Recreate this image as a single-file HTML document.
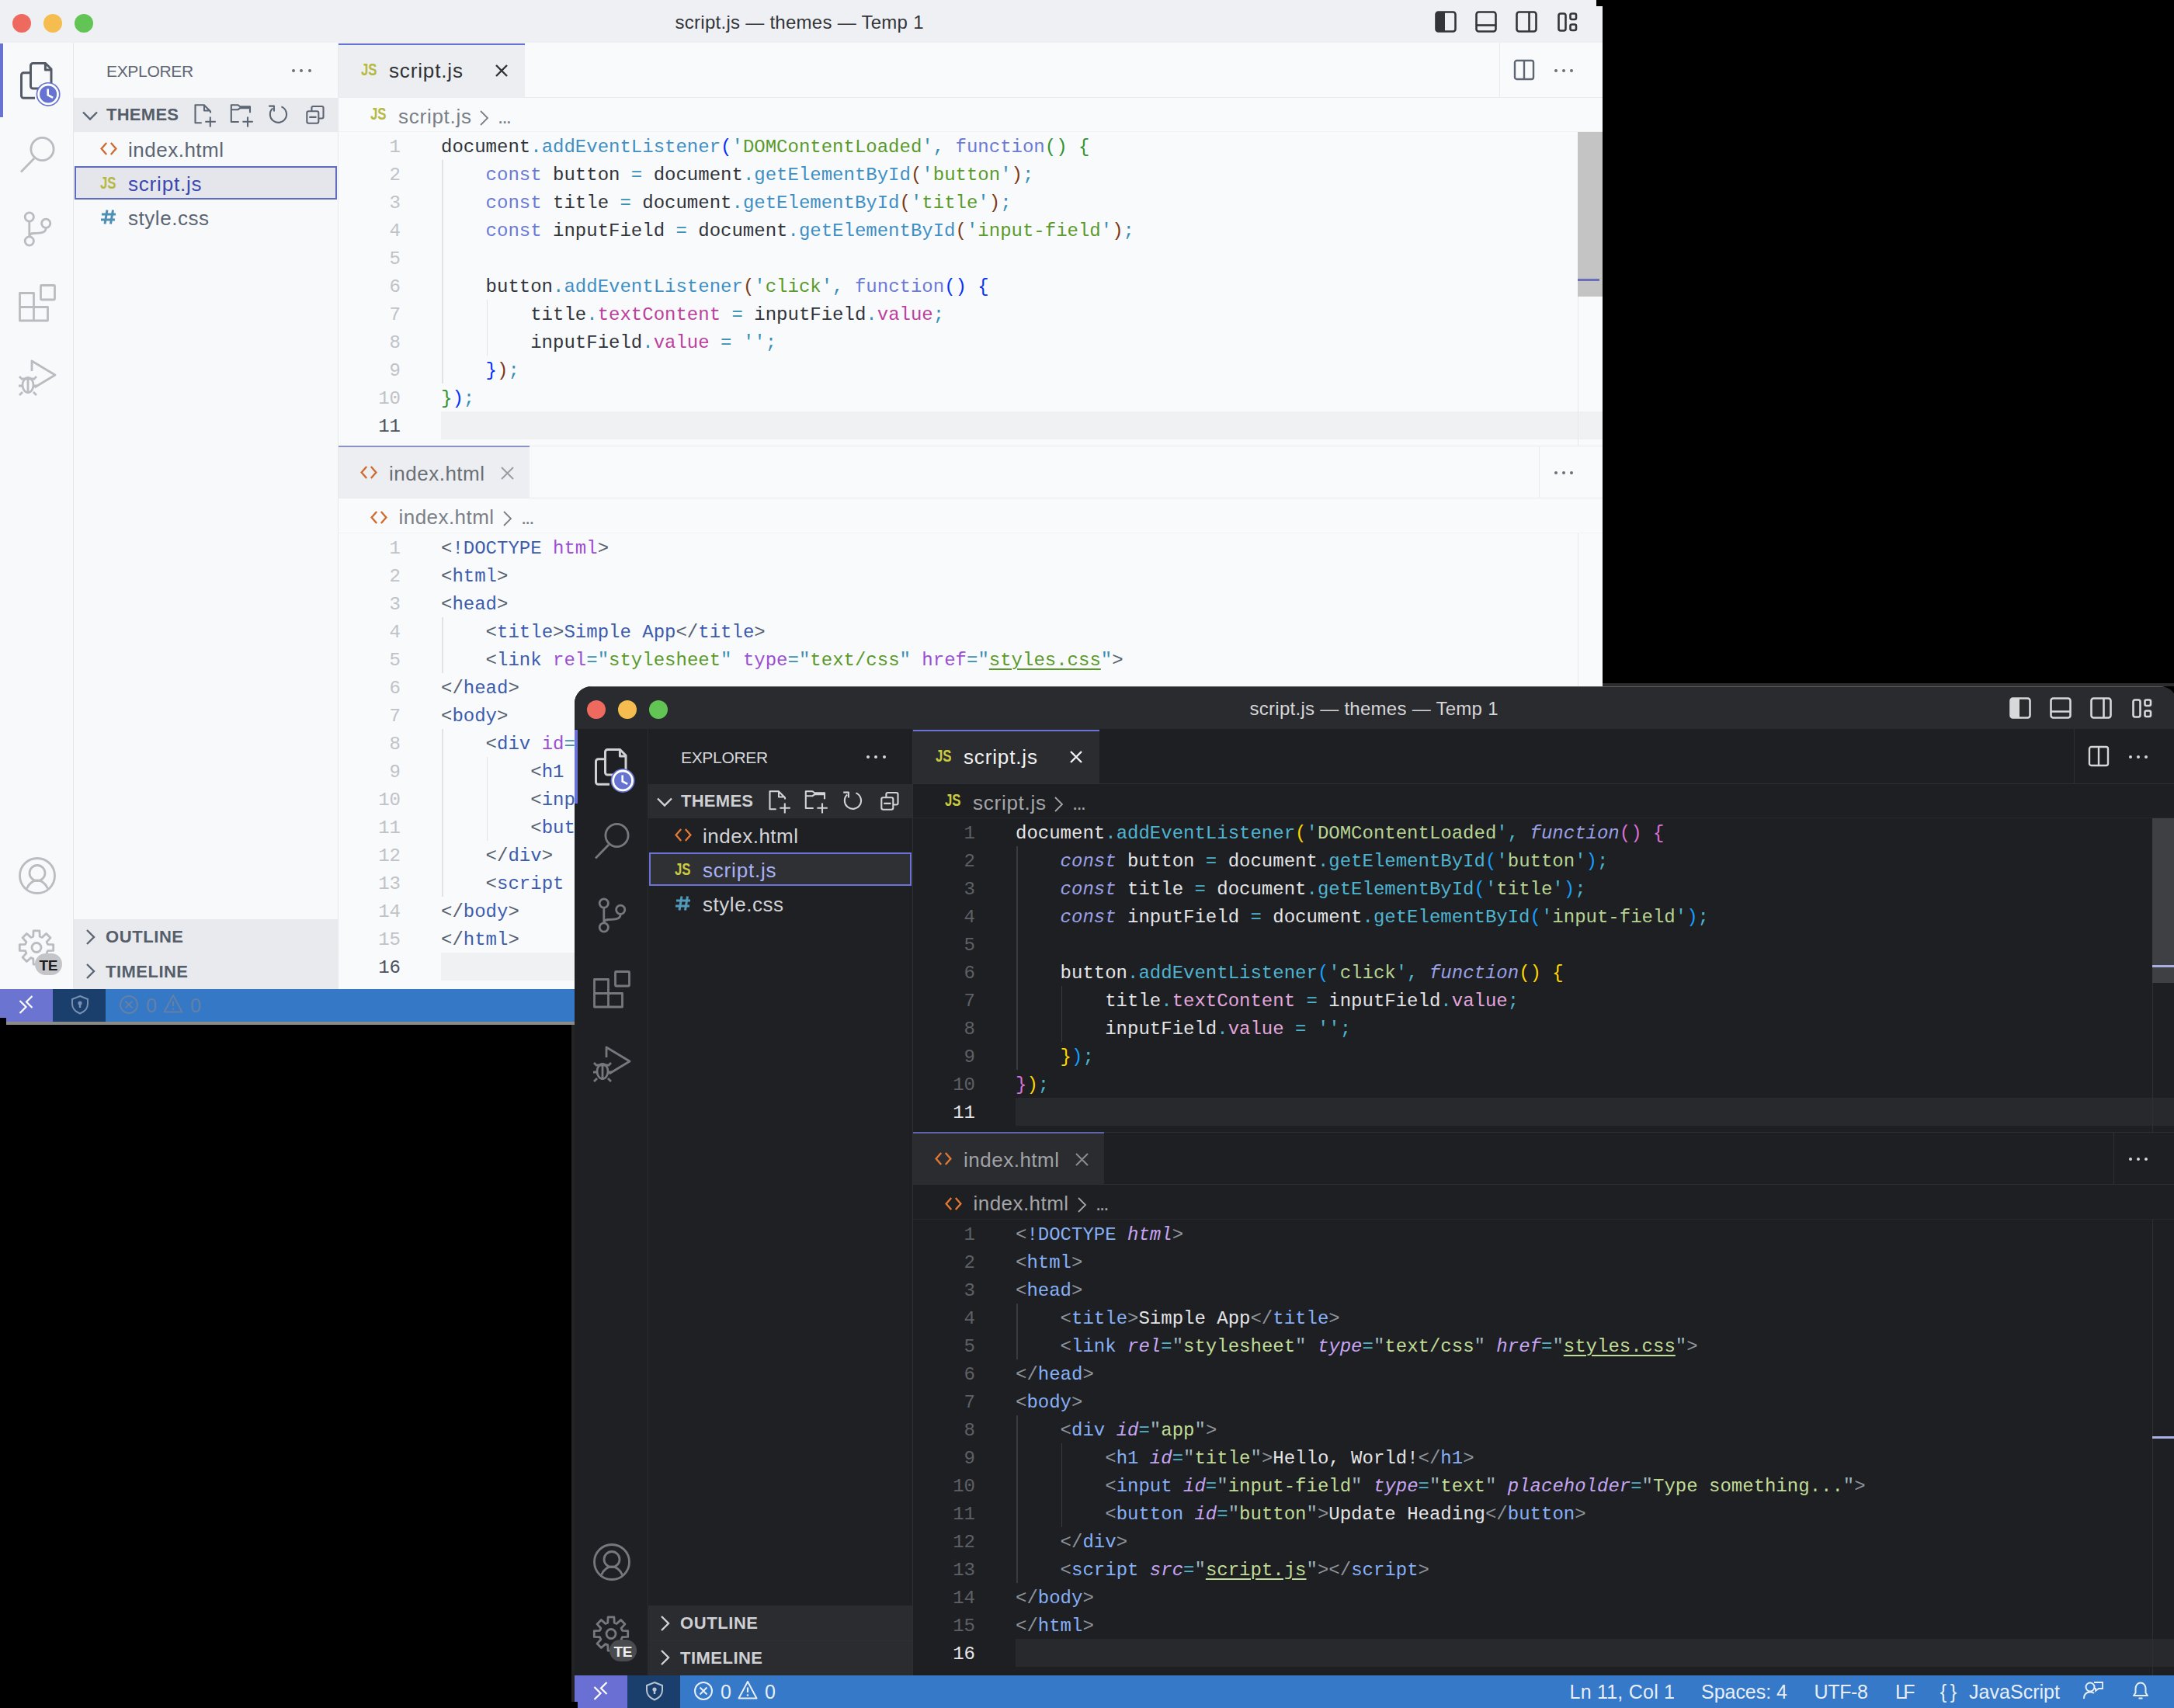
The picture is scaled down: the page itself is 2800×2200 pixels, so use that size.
<!DOCTYPE html><html><head><meta charset="utf-8"><style>
html,body{margin:0;padding:0;background:#000;}
body{width:2800px;height:2200px;position:relative;overflow:hidden;font-family:"Liberation Sans",sans-serif;}
.win{position:absolute;overflow:hidden;}
.r,.t,.s,.m{position:absolute;}
.t{white-space:pre;}
.m{white-space:pre;font-family:"Liberation Mono",monospace;font-size:24px;line-height:24px;}
</style></head><body><div class="win" style="left:0px;top:0px;width:2064px;height:1320px;"><div class="r" style="left:0px;top:0px;width:2064px;height:1320px;background:#f9fafb;"></div><div class="r" style="left:0px;top:0px;width:2064px;height:55px;background:#eff0f3;"></div><div class="r" style="left:16px;top:18px;width:24px;height:24px;border-radius:50%;background:#ee6a5f"></div><div class="r" style="left:56px;top:18px;width:24px;height:24px;border-radius:50%;background:#f5bd4f"></div><div class="r" style="left:96px;top:18px;width:24px;height:24px;border-radius:50%;background:#61c454"></div><div class="t" style="left:869.5px;top:16.9px;font-size:24px;line-height:24px;color:#333539;letter-spacing:0.27px;">script.js — themes — Temp 1</div><svg class="s" style="left:0px;top:0px;" width="2064" height="55" viewBox="0 0 2064 55"><rect x="1849.5" y="15.5" width="25" height="25" rx="3" stroke="#333539" stroke-width="2.6" fill="none"/><path d="M1849.5 18.5 a3 3 0 0 1 3-3 h8.5 v25 h-8.5 a3 3 0 0 1-3-3z" fill="#333539"/><rect x="1901.5" y="15.5" width="25" height="25" rx="3" stroke="#333539" stroke-width="2.6" fill="none"/><path d="M1901.5 32.5 h25" stroke="#333539" stroke-width="2.6" fill="none"/><rect x="1953.5" y="15.5" width="25" height="25" rx="3" stroke="#333539" stroke-width="2.6" fill="none"/><path d="M1969.5 15.5 v25" stroke="#333539" stroke-width="2.6" fill="none"/><rect x="2007.5" y="17.5" width="9" height="22" rx="2.5" stroke="#333539" stroke-width="2.6" fill="none"/><rect x="2022.5" y="17.5" width="7.5" height="7.5" rx="2" stroke="#333539" stroke-width="2.6" fill="none"/><rect x="2022.5" y="31.5" width="7.5" height="7.5" rx="2" stroke="#333539" stroke-width="2.6" fill="none"/></svg><div class="r" style="left:0px;top:55px;width:95px;height:1219px;background:#f8f9fa;"></div><div class="r" style="left:94px;top:55px;width:1px;height:1219px;background:#e6e7ea;"></div><div class="r" style="left:0px;top:56px;width:4px;height:95px;background:#6673d1;"></div><svg class="s" style="left:0px;top:0px;" width="95" height="1274" viewBox="0 0 95 1274"><path d="M45 126.3 H30.5 a3 3 0 0 1-3-3 V96.7 a3 3 0 0 1 3-3 H39.5" stroke="#545b66" stroke-width="3" fill="none" stroke-linejoin="round"/><path d="M50 114 H42.5 a3 3 0 0 1-3-3 V84.5 a3 3 0 0 1 3-3 H58.6 L66 89 V108" stroke="#545b66" stroke-width="3" fill="none" stroke-linejoin="round"/><path d="M58.4 81.5 V90 H66" stroke="#545b66" stroke-width="3" fill="none" stroke-linejoin="round"/><circle cx="62.1" cy="121.4" r="15.5" fill="#6673d1"/><circle cx="62.1" cy="121.4" r="12.4" fill="none" stroke="#fff" stroke-width="2.8"/><path d="M61.7 114.5 V122.5 L68.2 125.8" stroke="#fff" stroke-width="2.6" fill="none"/><circle cx="54.5" cy="192" r="14.6" stroke="#b9bcc1" stroke-width="2.8" fill="none" stroke-linejoin="round"/><path d="M27 221.5 L44 204" stroke="#b9bcc1" stroke-width="2.8" fill="none" stroke-linejoin="round"/><circle cx="37.8" cy="279.5" r="5.6" stroke="#b9bcc1" stroke-width="2.8" fill="none" stroke-linejoin="round"/><circle cx="59.2" cy="287.8" r="5.6" stroke="#b9bcc1" stroke-width="2.8" fill="none" stroke-linejoin="round"/><circle cx="37.8" cy="310.5" r="5.6" stroke="#b9bcc1" stroke-width="2.8" fill="none" stroke-linejoin="round"/><path d="M37.8 285 V305 M59.2 293.4 C59.2 300 52 300.5 44 300.5 C40 300.5 37.8 302 37.8 305" stroke="#b9bcc1" stroke-width="2.8" fill="none" stroke-linejoin="round"/><path d="M25.5 377.5 H43.5 V413 H25.5 Z M25.5 395.5 H61.5 V413 H43.5" stroke="#b9bcc1" stroke-width="2.8" fill="none" stroke-linejoin="round"/><rect x="52.5" y="367.5" width="18" height="18.5" rx="1" stroke="#b9bcc1" stroke-width="2.8" fill="none" stroke-linejoin="round"/><path d="M41 478 V465 L71 483 L44.5 499" stroke="#b9bcc1" stroke-width="2.8" fill="none" stroke-linejoin="round"/><ellipse cx="36" cy="496" rx="7" ry="9.5" stroke="#b9bcc1" stroke-width="2.8" fill="none" stroke-linejoin="round"/><path d="M29 488 h14 M25 485 l4 4 M47 485 l-4 4 M24 497 h5 M43 497 h5 M25 509 l4 -4 M47 509 l-4 -4 M36 486.5 v20" stroke="#b9bcc1" stroke-width="2.8" fill="none" stroke-linejoin="round"/><circle cx="48" cy="1128" r="22.5" stroke="#b9bcc1" stroke-width="2.8" fill="none" stroke-linejoin="round"/><circle cx="48" cy="1124.5" r="10" stroke="#b9bcc1" stroke-width="2.8" fill="none" stroke-linejoin="round"/><path d="M34.5 1144.5 C38 1137 43 1134 48 1134 C53 1134 58 1137 61.5 1144.5" stroke="#b9bcc1" stroke-width="2.8" fill="none" stroke-linejoin="round"/><path d="M42.8 1206.1 L43.1 1198.8 L50.9 1198.8 L51.2 1206.1 L54.2 1207.4 L59.6 1202.5 L65.0 1207.9 L60.1 1213.3 L61.4 1216.3 L68.7 1216.6 L68.7 1224.4 L61.4 1224.7 L60.1 1227.7 L65.0 1233.1 L59.6 1238.5 L54.2 1233.6 L51.2 1234.9 L50.9 1242.2 L43.1 1242.2 L42.8 1234.9 L39.8 1233.6 L34.4 1238.5 L29.0 1233.1 L33.9 1227.7 L32.6 1224.7 L25.3 1224.4 L25.3 1216.6 L32.6 1216.3 L33.9 1213.3 L29.0 1207.9 L34.4 1202.5 L39.8 1207.4Z" stroke="#b9bcc1" stroke-width="2.8" fill="none" stroke-linejoin="round"/><circle cx="47" cy="1220.5" r="6" stroke="#b9bcc1" stroke-width="2.8" fill="none" stroke-linejoin="round"/></svg><div class="r" style="left:45px;top:1228px;width:35px;height:28px;border-radius:14px;background:#c4c5c8"></div><div class="t" style="left:50.5px;top:1233.9px;font-size:19px;line-height:19px;color:#1e1e1e;font-weight:700;letter-spacing:-0.28px;">TE</div><div class="r" style="left:95px;top:55px;width:340px;height:1219px;background:#f8f9fa;"></div><div class="t" style="left:137.0px;top:81.2px;font-size:21px;line-height:21px;color:#5f6672;letter-spacing:-0.33px;">EXPLORER</div><div class="r" style="left:375.5px;top:89.0px;width:4px;height:4px;border-radius:50%;background:#6b6f76"></div><div class="r" style="left:386.0px;top:89.0px;width:4px;height:4px;border-radius:50%;background:#6b6f76"></div><div class="r" style="left:396.5px;top:89.0px;width:4px;height:4px;border-radius:50%;background:#6b6f76"></div><div class="r" style="left:95px;top:126px;width:340px;height:44px;background:#e8eaed;"></div><svg class="s" style="left:105px;top:142px;" width="22" height="14" viewBox="0 0 22 14"><path d="M2 2.5 L11 11.5 L20 2.5" stroke="#5b6573" stroke-width="2.4" fill="none"/></svg><div class="t" style="left:137.0px;top:137.4px;font-size:22px;line-height:22px;color:#555d6a;font-weight:700;letter-spacing:0.27px;">THEMES</div><svg class="s" style="left:0px;top:0px;" width="435" height="170" viewBox="0 0 435 170"><path d="M259.7 158.2 H251.5 V135.3 H262.8 L271 143.5 V145.5 M263 135.3 V142.5 H271" stroke="#5b6573" stroke-width="2.1" fill="none" stroke-linejoin="round"/><path d="M270.8 150.5 V163.6 M264.3 156.8 H277.8" stroke="#5b6573" stroke-width="2.1" fill="none" stroke-linejoin="round"/><path d="M307.7 157 H297.8 V135.3 H306.5 L309 137.3 H322 V145.2 M297.8 141.2 H306.5 L309 139.3 H322" stroke="#5b6573" stroke-width="2.1" fill="none" stroke-linejoin="round"/><path d="M319 150.5 V163.6 M312.4 156.8 H325.8" stroke="#5b6573" stroke-width="2.1" fill="none" stroke-linejoin="round"/><path d="M362.4 137.4 A10.6 10.6 0 1 1 351.2 139.5" stroke="#5b6573" stroke-width="2.1" fill="none" stroke-linejoin="round"/><path d="M346.2 136.6 H352.9 V143.5" stroke="#5b6573" stroke-width="2.1" fill="none" stroke-linejoin="round"/><rect x="395.3" y="143.2" width="15" height="15.5" rx="2.2" stroke="#5b6573" stroke-width="2.1" fill="none" stroke-linejoin="round"/><path d="M401.4 143.2 V139 a2 2 0 0 1 2-2 H414.5 a2 2 0 0 1 2 2 V150.5 a2 2 0 0 1-2 2 H410.3 M398.3 150.9 H407.5" stroke="#5b6573" stroke-width="2.1" fill="none" stroke-linejoin="round"/></svg><svg class="s" style="left:128.5px;top:183px;" width="22" height="17" viewBox="0 0 22 17"><path d="M8.2 1 L1.6 8.5 L8.2 16 M13.8 1 L20.4 8.5 L13.8 16" stroke="#d0692c" stroke-width="2.3" fill="none"/></svg><div class="t" style="left:165.0px;top:180.0px;font-size:26px;line-height:26px;color:#5b6573;letter-spacing:0.50px;">index.html</div><div class="r" style="left:96px;top:214px;width:338px;height:43px;background:#e4e6eb;border:2px solid #5f6bbf;box-sizing:border-box"></div><div class="t" style="left:129.4px;top:224.9px;font-size:22.5px;line-height:22.5px;color:#b5b942;font-weight:700;transform:scaleX(0.747);transform-origin:left">JS</div><div class="t" style="left:165.0px;top:224.0px;font-size:26px;line-height:26px;color:#3a47b0;letter-spacing:0.80px;">script.js</div><svg class="s" style="left:130px;top:270px;" width="20" height="19" viewBox="0 0 20 19"><path d="M8 0.5 L5 18.5 M15.5 0.5 L12.5 18.5 M1 6 H19 M0 13 H18" stroke="#4f8fb5" stroke-width="3" fill="none"/></svg><div class="t" style="left:165.0px;top:268.0px;font-size:26px;line-height:26px;color:#5b6573;letter-spacing:0.54px;">style.css</div><div class="r" style="left:95px;top:1184px;width:340px;height:90px;background:#e8eaed;"></div><div class="r" style="left:95px;top:1229px;width:340px;height:1px;background:#e9eaec;"></div><svg class="s" style="left:109px;top:1196px;" width="14" height="22" viewBox="0 0 14 22"><path d="M3 2 L12 11 L3 20" stroke="#5b6573" stroke-width="2.4" fill="none"/></svg><div class="t" style="left:136.0px;top:1196.4px;font-size:22px;line-height:22px;color:#555d6a;font-weight:700;letter-spacing:0.58px;">OUTLINE</div><svg class="s" style="left:109px;top:1240px;" width="14" height="22" viewBox="0 0 14 22"><path d="M3 2 L12 11 L3 20" stroke="#5b6573" stroke-width="2.4" fill="none"/></svg><div class="t" style="left:136.0px;top:1240.9px;font-size:22px;line-height:22px;color:#555d6a;font-weight:700;letter-spacing:0.48px;">TIMELINE</div><div class="r" style="left:435px;top:55px;width:1px;height:1219px;background:#e9eaec;"></div><div class="r" style="left:436px;top:55px;width:1628px;height:70px;background:#f9fafb;"></div><div class="r" style="left:436px;top:125px;width:1628px;height:1px;background:#e9eaec;"></div><div class="r" style="left:436px;top:55px;width:240px;height:70px;background:#eceef1;"></div><div class="r" style="left:436px;top:56px;width:240px;height:2px;background:#6673d1;"></div><div class="t" style="left:465px;top:79.4px;font-size:22.5px;line-height:22.5px;color:#b5b942;font-weight:700;transform:scaleX(0.747);transform-origin:left">JS</div><div class="t" style="left:501.0px;top:78.0px;font-size:26px;line-height:26px;color:#303236;letter-spacing:0.86px;">script.js</div><svg class="s" style="left:638px;top:83px;" width="16" height="16" viewBox="0 0 16 16"><path d="M1 1 L15 15 M15 1 L1 15" stroke="#303236" stroke-width="2.4"/></svg><div class="r" style="left:1931px;top:55px;width:1px;height:70px;background:#e9eaec;"></div><svg class="s" style="left:1949px;top:76px;" width="28" height="28" viewBox="0 0 28 28"><rect x="2" y="2" width="24" height="24" rx="2.5" stroke="#5e6673" stroke-width="2.4" fill="none"/><path d="M14 2 V26" stroke="#5e6673" stroke-width="2.4"/></svg><div class="r" style="left:2001.8px;top:88.8px;width:4.4px;height:4.4px;border-radius:50%;background:#6b6f76"></div><div class="r" style="left:2011.8px;top:88.8px;width:4.4px;height:4.4px;border-radius:50%;background:#6b6f76"></div><div class="r" style="left:2021.8px;top:88.8px;width:4.4px;height:4.4px;border-radius:50%;background:#6b6f76"></div><div class="t" style="left:477px;top:136.4px;font-size:22.5px;line-height:22.5px;color:#b5b942;font-weight:700;transform:scaleX(0.747);transform-origin:left">JS</div><div class="t" style="left:513.0px;top:137.0px;font-size:26px;line-height:26px;color:#7b8088;letter-spacing:0.74px;">script.js</div><svg class="s" style="left:616px;top:141px;" width="14" height="22" viewBox="0 0 14 22"><path d="M3 2 L12 11 L3 20" stroke="#7b8088" stroke-width="1.8" fill="none"/></svg><div class="t" style="left:641.0px;top:137.0px;font-size:26px;line-height:26px;color:#7b8088;letter-spacing:-1.83px;">...</div><div class="r" style="left:436px;top:169px;width:1628px;height:1px;background:#f1f2f4;"></div><div class="r" style="left:568px;top:530px;width:1496px;height:36px;background:#eff1f3;"></div><div class="r" style="left:569.0px;top:206px;width:1.6px;height:288px;background:#e1e3e6;"></div><div class="r" style="left:626.6px;top:386px;width:1.6px;height:72px;background:#e1e3e6;"></div><div class="m" style="left:501.6px;top:177.6px;color:#bfc3c8">1</div><div class="m" style="left:568px;top:177.6px"><span style="color:#30343a;">document</span><span style="color:#3a8fb5;">.</span><span style="color:#3e8fc4;">addEventListener</span><span style="color:#0431fa;">(</span><span style="color:#3a8fb5;">&#x27;</span><span style="color:#5a9a2b;">DOMContentLoaded</span><span style="color:#3a8fb5;">&#x27;</span><span style="color:#3a8fb5;">,</span><span style="color:#30343a;"> </span><span style="color:#6b79d6;">function</span><span style="color:#319331;">()</span><span style="color:#30343a;"> </span><span style="color:#319331;">{</span></div><div class="m" style="left:501.6px;top:213.6px;color:#bfc3c8">2</div><div class="m" style="left:568px;top:213.6px"><span style="color:#30343a;">    </span><span style="color:#6b79d6;">const</span><span style="color:#30343a;"> button </span><span style="color:#3a8fb5;">=</span><span style="color:#30343a;"> document</span><span style="color:#3a8fb5;">.</span><span style="color:#3e8fc4;">getElementById</span><span style="color:#7b3814;">(</span><span style="color:#3a8fb5;">&#x27;</span><span style="color:#5a9a2b;">button</span><span style="color:#3a8fb5;">&#x27;</span><span style="color:#7b3814;">)</span><span style="color:#3a8fb5;">;</span></div><div class="m" style="left:501.6px;top:249.6px;color:#bfc3c8">3</div><div class="m" style="left:568px;top:249.6px"><span style="color:#30343a;">    </span><span style="color:#6b79d6;">const</span><span style="color:#30343a;"> title </span><span style="color:#3a8fb5;">=</span><span style="color:#30343a;"> document</span><span style="color:#3a8fb5;">.</span><span style="color:#3e8fc4;">getElementById</span><span style="color:#7b3814;">(</span><span style="color:#3a8fb5;">&#x27;</span><span style="color:#5a9a2b;">title</span><span style="color:#3a8fb5;">&#x27;</span><span style="color:#7b3814;">)</span><span style="color:#3a8fb5;">;</span></div><div class="m" style="left:501.6px;top:285.6px;color:#bfc3c8">4</div><div class="m" style="left:568px;top:285.6px"><span style="color:#30343a;">    </span><span style="color:#6b79d6;">const</span><span style="color:#30343a;"> inputField </span><span style="color:#3a8fb5;">=</span><span style="color:#30343a;"> document</span><span style="color:#3a8fb5;">.</span><span style="color:#3e8fc4;">getElementById</span><span style="color:#7b3814;">(</span><span style="color:#3a8fb5;">&#x27;</span><span style="color:#5a9a2b;">input-field</span><span style="color:#3a8fb5;">&#x27;</span><span style="color:#7b3814;">)</span><span style="color:#3a8fb5;">;</span></div><div class="m" style="left:501.6px;top:321.6px;color:#bfc3c8">5</div><div class="m" style="left:501.6px;top:357.6px;color:#bfc3c8">6</div><div class="m" style="left:568px;top:357.6px"><span style="color:#30343a;">    button</span><span style="color:#3a8fb5;">.</span><span style="color:#3e8fc4;">addEventListener</span><span style="color:#7b3814;">(</span><span style="color:#3a8fb5;">&#x27;</span><span style="color:#5a9a2b;">click</span><span style="color:#3a8fb5;">&#x27;</span><span style="color:#3a8fb5;">,</span><span style="color:#30343a;"> </span><span style="color:#6b79d6;">function</span><span style="color:#0431fa;">()</span><span style="color:#30343a;"> </span><span style="color:#0431fa;">{</span></div><div class="m" style="left:501.6px;top:393.6px;color:#bfc3c8">7</div><div class="m" style="left:568px;top:393.6px"><span style="color:#30343a;">        title</span><span style="color:#3a8fb5;">.</span><span style="color:#bd3f9d;">textContent</span><span style="color:#30343a;"> </span><span style="color:#3a8fb5;">=</span><span style="color:#30343a;"> inputField</span><span style="color:#3a8fb5;">.</span><span style="color:#bd3f9d;">value</span><span style="color:#3a8fb5;">;</span></div><div class="m" style="left:501.6px;top:429.6px;color:#bfc3c8">8</div><div class="m" style="left:568px;top:429.6px"><span style="color:#30343a;">        inputField</span><span style="color:#3a8fb5;">.</span><span style="color:#bd3f9d;">value</span><span style="color:#30343a;"> </span><span style="color:#3a8fb5;">=</span><span style="color:#30343a;"> </span><span style="color:#3a8fb5;">&#x27;&#x27;</span><span style="color:#3a8fb5;">;</span></div><div class="m" style="left:501.6px;top:465.6px;color:#bfc3c8">9</div><div class="m" style="left:568px;top:465.6px"><span style="color:#30343a;">    </span><span style="color:#0431fa;">}</span><span style="color:#7b3814;">)</span><span style="color:#3a8fb5;">;</span></div><div class="m" style="left:487.2px;top:501.6px;color:#bfc3c8">10</div><div class="m" style="left:568px;top:501.6px"><span style="color:#319331;">}</span><span style="color:#0431fa;">)</span><span style="color:#3a8fb5;">;</span></div><div class="m" style="left:487.2px;top:537.6px;color:#4b5260">11</div><div class="r" style="left:2032px;top:170px;width:1px;height:404px;background:#e8e8ea;"></div><div class="r" style="left:2032px;top:170px;width:32px;height:212px;background:#c4c4c4;"></div><div class="r" style="left:2032px;top:359px;width:28px;height:3px;background:#6a6fb8;"></div><div class="r" style="left:436px;top:574px;width:1628px;height:1px;background:#e9eaec;"></div><div class="r" style="left:436px;top:575px;width:1628px;height:67px;background:#f9fafb;"></div><div class="r" style="left:436px;top:641px;width:1628px;height:1px;background:#e9eaec;"></div><div class="r" style="left:436px;top:575px;width:246px;height:66px;background:#eceef1;"></div><div class="r" style="left:436px;top:574px;width:246px;height:2px;background:#8a93c4;"></div><svg class="s" style="left:464px;top:600px;" width="22" height="17" viewBox="0 0 22 17"><path d="M8.2 1 L1.6 8.5 L8.2 16 M13.8 1 L20.4 8.5 L13.8 16" stroke="#d0692c" stroke-width="2.3" fill="none"/></svg><div class="t" style="left:501.0px;top:596.7px;font-size:26px;line-height:26px;color:#6a6e75;letter-spacing:0.50px;">index.html</div><svg class="s" style="left:645px;top:601px;" width="17" height="17" viewBox="0 0 17 17"><path d="M1 1 L16 16 M16 1 L1 16" stroke="#9a9ea4" stroke-width="2"/></svg><div class="r" style="left:1982px;top:575px;width:1px;height:66px;background:#e9eaec;"></div><div class="r" style="left:2001.8px;top:606.8px;width:4.4px;height:4.4px;border-radius:50%;background:#6b6f76"></div><div class="r" style="left:2011.8px;top:606.8px;width:4.4px;height:4.4px;border-radius:50%;background:#6b6f76"></div><div class="r" style="left:2021.8px;top:606.8px;width:4.4px;height:4.4px;border-radius:50%;background:#6b6f76"></div><svg class="s" style="left:476.5px;top:657.5px;" width="22" height="17" viewBox="0 0 22 17"><path d="M8.2 1 L1.6 8.5 L8.2 16 M13.8 1 L20.4 8.5 L13.8 16" stroke="#d0692c" stroke-width="2.3" fill="none"/></svg><div class="t" style="left:513.6px;top:653.2px;font-size:26px;line-height:26px;color:#7b8088;letter-spacing:0.44px;">index.html</div><svg class="s" style="left:646px;top:657px;" width="14" height="22" viewBox="0 0 14 22"><path d="M3 2 L12 11 L3 20" stroke="#7b8088" stroke-width="1.8" fill="none"/></svg><div class="t" style="left:671.0px;top:653.2px;font-size:26px;line-height:26px;color:#7b8088;letter-spacing:-2.13px;">...</div><div class="r" style="left:436px;top:686px;width:1628px;height:1px;background:#f1f2f4;"></div><div class="r" style="left:568px;top:1227px;width:1496px;height:36px;background:#eff1f3;"></div><div class="r" style="left:569.0px;top:795px;width:1.6px;height:72px;background:#e1e3e6;"></div><div class="r" style="left:569.0px;top:939px;width:1.6px;height:216px;background:#e1e3e6;"></div><div class="r" style="left:626.6px;top:975px;width:1.6px;height:108px;background:#e1e3e6;"></div><div class="m" style="left:501.6px;top:694.6px;color:#bfc3c8">1</div><div class="m" style="left:568px;top:694.6px"><span style="color:#556070;">&lt;</span><span style="color:#3b5cae;">!DOCTYPE</span><span style="color:#30343a;"> </span><span style="color:#9a4fd2;">html</span><span style="color:#556070;">&gt;</span></div><div class="m" style="left:501.6px;top:730.6px;color:#bfc3c8">2</div><div class="m" style="left:568px;top:730.6px"><span style="color:#556070;">&lt;</span><span style="color:#3b5cae;">html</span><span style="color:#556070;">&gt;</span></div><div class="m" style="left:501.6px;top:766.6px;color:#bfc3c8">3</div><div class="m" style="left:568px;top:766.6px"><span style="color:#556070;">&lt;</span><span style="color:#3b5cae;">head</span><span style="color:#556070;">&gt;</span></div><div class="m" style="left:501.6px;top:802.6px;color:#bfc3c8">4</div><div class="m" style="left:568px;top:802.6px"><span style="color:#30343a;">    </span><span style="color:#556070;">&lt;</span><span style="color:#3b5cae;">title</span><span style="color:#556070;">&gt;</span><span style="color:#3b5cae;">Simple App</span><span style="color:#556070;">&lt;/</span><span style="color:#3b5cae;">title</span><span style="color:#556070;">&gt;</span></div><div class="m" style="left:501.6px;top:838.6px;color:#bfc3c8">5</div><div class="m" style="left:568px;top:838.6px"><span style="color:#30343a;">    </span><span style="color:#556070;">&lt;</span><span style="color:#3b5cae;">link</span><span style="color:#30343a;"> </span><span style="color:#9a4fd2;">rel</span><span style="color:#3a8fb5;">=</span><span style="color:#3a8fb5;">&quot;</span><span style="color:#5a9a2b;">stylesheet</span><span style="color:#3a8fb5;">&quot;</span><span style="color:#30343a;"> </span><span style="color:#9a4fd2;">type</span><span style="color:#3a8fb5;">=</span><span style="color:#3a8fb5;">&quot;</span><span style="color:#5a9a2b;">text/css</span><span style="color:#3a8fb5;">&quot;</span><span style="color:#30343a;"> </span><span style="color:#9a4fd2;">href</span><span style="color:#3a8fb5;">=</span><span style="color:#3a8fb5;">&quot;</span><span style="color:#5a9a2b;text-decoration:underline;text-underline-offset:4px;text-decoration-thickness:2px;">styles.css</span><span style="color:#3a8fb5;">&quot;</span><span style="color:#556070;">&gt;</span></div><div class="m" style="left:501.6px;top:874.6px;color:#bfc3c8">6</div><div class="m" style="left:568px;top:874.6px"><span style="color:#556070;">&lt;/</span><span style="color:#3b5cae;">head</span><span style="color:#556070;">&gt;</span></div><div class="m" style="left:501.6px;top:910.6px;color:#bfc3c8">7</div><div class="m" style="left:568px;top:910.6px"><span style="color:#556070;">&lt;</span><span style="color:#3b5cae;">body</span><span style="color:#556070;">&gt;</span></div><div class="m" style="left:501.6px;top:946.6px;color:#bfc3c8">8</div><div class="m" style="left:568px;top:946.6px"><span style="color:#30343a;">    </span><span style="color:#556070;">&lt;</span><span style="color:#3b5cae;">div</span><span style="color:#30343a;"> </span><span style="color:#9a4fd2;">id</span><span style="color:#3a8fb5;">=</span><span style="color:#3a8fb5;">&quot;</span><span style="color:#5a9a2b;">app</span><span style="color:#3a8fb5;">&quot;</span><span style="color:#556070;">&gt;</span></div><div class="m" style="left:501.6px;top:982.6px;color:#bfc3c8">9</div><div class="m" style="left:568px;top:982.6px"><span style="color:#30343a;">        </span><span style="color:#556070;">&lt;</span><span style="color:#3b5cae;">h1</span><span style="color:#30343a;"> </span><span style="color:#9a4fd2;">id</span><span style="color:#3a8fb5;">=</span><span style="color:#3a8fb5;">&quot;</span><span style="color:#5a9a2b;">title</span><span style="color:#3a8fb5;">&quot;</span><span style="color:#556070;">&gt;</span><span style="color:#3b5cae;">Hello, World!</span><span style="color:#556070;">&lt;/</span><span style="color:#3b5cae;">h1</span><span style="color:#556070;">&gt;</span></div><div class="m" style="left:487.2px;top:1018.6px;color:#bfc3c8">10</div><div class="m" style="left:568px;top:1018.6px"><span style="color:#30343a;">        </span><span style="color:#556070;">&lt;</span><span style="color:#3b5cae;">input</span><span style="color:#30343a;"> </span><span style="color:#9a4fd2;">id</span><span style="color:#3a8fb5;">=</span><span style="color:#3a8fb5;">&quot;</span><span style="color:#5a9a2b;">input-field</span><span style="color:#3a8fb5;">&quot;</span><span style="color:#30343a;"> </span><span style="color:#9a4fd2;">type</span><span style="color:#3a8fb5;">=</span><span style="color:#3a8fb5;">&quot;</span><span style="color:#5a9a2b;">text</span><span style="color:#3a8fb5;">&quot;</span><span style="color:#30343a;"> </span><span style="color:#9a4fd2;">placeholder</span><span style="color:#3a8fb5;">=</span><span style="color:#3a8fb5;">&quot;</span><span style="color:#5a9a2b;">Type something...</span><span style="color:#3a8fb5;">&quot;</span><span style="color:#556070;">&gt;</span></div><div class="m" style="left:487.2px;top:1054.6px;color:#bfc3c8">11</div><div class="m" style="left:568px;top:1054.6px"><span style="color:#30343a;">        </span><span style="color:#556070;">&lt;</span><span style="color:#3b5cae;">button</span><span style="color:#30343a;"> </span><span style="color:#9a4fd2;">id</span><span style="color:#3a8fb5;">=</span><span style="color:#3a8fb5;">&quot;</span><span style="color:#5a9a2b;">button</span><span style="color:#3a8fb5;">&quot;</span><span style="color:#556070;">&gt;</span><span style="color:#3b5cae;">Update Heading</span><span style="color:#556070;">&lt;/</span><span style="color:#3b5cae;">button</span><span style="color:#556070;">&gt;</span></div><div class="m" style="left:487.2px;top:1090.6px;color:#bfc3c8">12</div><div class="m" style="left:568px;top:1090.6px"><span style="color:#30343a;">    </span><span style="color:#556070;">&lt;/</span><span style="color:#3b5cae;">div</span><span style="color:#556070;">&gt;</span></div><div class="m" style="left:487.2px;top:1126.6px;color:#bfc3c8">13</div><div class="m" style="left:568px;top:1126.6px"><span style="color:#30343a;">    </span><span style="color:#556070;">&lt;</span><span style="color:#3b5cae;">script</span><span style="color:#30343a;"> </span><span style="color:#9a4fd2;">src</span><span style="color:#3a8fb5;">=</span><span style="color:#3a8fb5;">&quot;</span><span style="color:#5a9a2b;text-decoration:underline;text-underline-offset:4px;text-decoration-thickness:2px;">script.js</span><span style="color:#3a8fb5;">&quot;</span><span style="color:#556070;">&gt;&lt;/</span><span style="color:#3b5cae;">script</span><span style="color:#556070;">&gt;</span></div><div class="m" style="left:487.2px;top:1162.6px;color:#bfc3c8">14</div><div class="m" style="left:568px;top:1162.6px"><span style="color:#556070;">&lt;/</span><span style="color:#3b5cae;">body</span><span style="color:#556070;">&gt;</span></div><div class="m" style="left:487.2px;top:1198.6px;color:#bfc3c8">15</div><div class="m" style="left:568px;top:1198.6px"><span style="color:#556070;">&lt;/</span><span style="color:#3b5cae;">html</span><span style="color:#556070;">&gt;</span></div><div class="m" style="left:487.2px;top:1234.6px;color:#4b5260">16</div><div class="r" style="left:2032px;top:687px;width:1px;height:587px;background:#e8e8ea;"></div><div class="r" style="left:2032px;top:966px;width:32px;height:3px;background:#8d93c9;"></div><div class="r" style="left:0px;top:1274px;width:2064px;height:42px;background:#3478c6;"></div><div class="r" style="left:0px;top:1274px;width:68px;height:42px;background:#6c74d2;"></div><div class="r" style="left:68px;top:1274px;width:68px;height:42px;background:#1b3f6c;"></div><svg class="s" style="left:0px;top:1274px;" width="68" height="42" viewBox="0 0 68 42"><path d="M25.5 15 L33.5 23 L25.5 31 M41.5 9 L34 16.5 L41.5 24" stroke="#fff" stroke-width="2.2" fill="none"/></svg><svg class="s" style="left:90px;top:1281px;" width="26" height="26" viewBox="0 0 26 26"><path d="M13 2 L23 6 V12 C23 18 19 22 13 24.5 C7 22 3 18 3 12 V6 Z" stroke="#7990b0" stroke-width="2" fill="none"/><circle cx="13" cy="11" r="2.6" fill="#7990b0"/><path d="M13 12 V17" stroke="#7990b0" stroke-width="2.4"/></svg><svg class="s" style="left:153px;top:1281px;" width="26" height="26" viewBox="0 0 26 26"><circle cx="13" cy="13" r="11" stroke="#6580a6" stroke-width="2" fill="none"/><path d="M8.5 8.5 L17.5 17.5 M17.5 8.5 L8.5 17.5" stroke="#6580a6" stroke-width="2"/></svg><div class="t" style="left:188.0px;top:1282.8px;font-size:25px;line-height:25px;color:#6580a6;">0</div><svg class="s" style="left:210px;top:1280px;" width="26" height="26" viewBox="0 0 26 26"><path d="M13 2 L24.5 23.5 H1.5 Z" stroke="#6580a6" stroke-width="2" fill="none" stroke-linejoin="round"/><path d="M13 9.5 V16" stroke="#6580a6" stroke-width="2.2"/><circle cx="13" cy="19.5" r="1.3" fill="#6580a6"/></svg><div class="t" style="left:245.0px;top:1282.8px;font-size:25px;line-height:25px;color:#6580a6;">0</div><div class="r" style="left:0px;top:1316px;width:2064px;height:4px;background:#8b8b88;"></div></div><div class="r" style="left:2056px;top:0px;width:8px;height:8px;background:#000;"></div><div class="r" style="left:0px;top:1311px;width:8px;height:9px;background:#000;"></div><div class="r" style="left:2064px;top:880px;width:736px;height:4px;background:#2c2c2e;"></div><div class="r" style="left:736px;top:1320px;width:4px;height:872px;background:#232325;"></div><div class="win" style="left:740px;top:884px;width:2064px;height:1320px;border-radius:22px 22px 0 0;"><div class="r" style="left:0px;top:0px;width:2064px;height:1320px;background:#1e1f22;"></div><div class="r" style="left:0px;top:0px;width:2064px;height:55px;background:#2a2b2f;"></div><div class="r" style="left:16px;top:18px;width:24px;height:24px;border-radius:50%;background:#ee6a5f"></div><div class="r" style="left:56px;top:18px;width:24px;height:24px;border-radius:50%;background:#f5bd4f"></div><div class="r" style="left:96px;top:18px;width:24px;height:24px;border-radius:50%;background:#61c454"></div><div class="t" style="left:869.5px;top:16.9px;font-size:24px;line-height:24px;color:#d6d6d8;letter-spacing:0.27px;">script.js — themes — Temp 1</div><svg class="s" style="left:0px;top:0px;" width="2064" height="55" viewBox="0 0 2064 55"><rect x="1849.5" y="15.5" width="25" height="25" rx="3" stroke="#d8d8da" stroke-width="2.6" fill="none"/><path d="M1849.5 18.5 a3 3 0 0 1 3-3 h8.5 v25 h-8.5 a3 3 0 0 1-3-3z" fill="#d8d8da"/><rect x="1901.5" y="15.5" width="25" height="25" rx="3" stroke="#d8d8da" stroke-width="2.6" fill="none"/><path d="M1901.5 32.5 h25" stroke="#d8d8da" stroke-width="2.6" fill="none"/><rect x="1953.5" y="15.5" width="25" height="25" rx="3" stroke="#d8d8da" stroke-width="2.6" fill="none"/><path d="M1969.5 15.5 v25" stroke="#d8d8da" stroke-width="2.6" fill="none"/><rect x="2007.5" y="17.5" width="9" height="22" rx="2.5" stroke="#d8d8da" stroke-width="2.6" fill="none"/><rect x="2022.5" y="17.5" width="7.5" height="7.5" rx="2" stroke="#d8d8da" stroke-width="2.6" fill="none"/><rect x="2022.5" y="31.5" width="7.5" height="7.5" rx="2" stroke="#d8d8da" stroke-width="2.6" fill="none"/></svg><div class="r" style="left:0px;top:55px;width:95px;height:1219px;background:#1f2023;"></div><div class="r" style="left:94px;top:55px;width:1px;height:1219px;background:#2a2b2e;"></div><div class="r" style="left:0px;top:56px;width:4px;height:95px;background:#6b74d6;"></div><svg class="s" style="left:0px;top:0px;" width="95" height="1274" viewBox="0 0 95 1274"><path d="M45 126.3 H30.5 a3 3 0 0 1-3-3 V96.7 a3 3 0 0 1 3-3 H39.5" stroke="#d0d0d2" stroke-width="3" fill="none" stroke-linejoin="round"/><path d="M50 114 H42.5 a3 3 0 0 1-3-3 V84.5 a3 3 0 0 1 3-3 H58.6 L66 89 V108" stroke="#d0d0d2" stroke-width="3" fill="none" stroke-linejoin="round"/><path d="M58.4 81.5 V90 H66" stroke="#d0d0d2" stroke-width="3" fill="none" stroke-linejoin="round"/><circle cx="62.1" cy="121.4" r="15.5" fill="#6673d1"/><circle cx="62.1" cy="121.4" r="12.4" fill="none" stroke="#fff" stroke-width="2.8"/><path d="M61.7 114.5 V122.5 L68.2 125.8" stroke="#fff" stroke-width="2.6" fill="none"/><circle cx="54.5" cy="192" r="14.6" stroke="#76787d" stroke-width="2.8" fill="none" stroke-linejoin="round"/><path d="M27 221.5 L44 204" stroke="#76787d" stroke-width="2.8" fill="none" stroke-linejoin="round"/><circle cx="37.8" cy="279.5" r="5.6" stroke="#76787d" stroke-width="2.8" fill="none" stroke-linejoin="round"/><circle cx="59.2" cy="287.8" r="5.6" stroke="#76787d" stroke-width="2.8" fill="none" stroke-linejoin="round"/><circle cx="37.8" cy="310.5" r="5.6" stroke="#76787d" stroke-width="2.8" fill="none" stroke-linejoin="round"/><path d="M37.8 285 V305 M59.2 293.4 C59.2 300 52 300.5 44 300.5 C40 300.5 37.8 302 37.8 305" stroke="#76787d" stroke-width="2.8" fill="none" stroke-linejoin="round"/><path d="M25.5 377.5 H43.5 V413 H25.5 Z M25.5 395.5 H61.5 V413 H43.5" stroke="#76787d" stroke-width="2.8" fill="none" stroke-linejoin="round"/><rect x="52.5" y="367.5" width="18" height="18.5" rx="1" stroke="#76787d" stroke-width="2.8" fill="none" stroke-linejoin="round"/><path d="M41 478 V465 L71 483 L44.5 499" stroke="#76787d" stroke-width="2.8" fill="none" stroke-linejoin="round"/><ellipse cx="36" cy="496" rx="7" ry="9.5" stroke="#76787d" stroke-width="2.8" fill="none" stroke-linejoin="round"/><path d="M29 488 h14 M25 485 l4 4 M47 485 l-4 4 M24 497 h5 M43 497 h5 M25 509 l4 -4 M47 509 l-4 -4 M36 486.5 v20" stroke="#76787d" stroke-width="2.8" fill="none" stroke-linejoin="round"/><circle cx="48" cy="1128" r="22.5" stroke="#76787d" stroke-width="2.8" fill="none" stroke-linejoin="round"/><circle cx="48" cy="1124.5" r="10" stroke="#76787d" stroke-width="2.8" fill="none" stroke-linejoin="round"/><path d="M34.5 1144.5 C38 1137 43 1134 48 1134 C53 1134 58 1137 61.5 1144.5" stroke="#76787d" stroke-width="2.8" fill="none" stroke-linejoin="round"/><path d="M42.8 1206.1 L43.1 1198.8 L50.9 1198.8 L51.2 1206.1 L54.2 1207.4 L59.6 1202.5 L65.0 1207.9 L60.1 1213.3 L61.4 1216.3 L68.7 1216.6 L68.7 1224.4 L61.4 1224.7 L60.1 1227.7 L65.0 1233.1 L59.6 1238.5 L54.2 1233.6 L51.2 1234.9 L50.9 1242.2 L43.1 1242.2 L42.8 1234.9 L39.8 1233.6 L34.4 1238.5 L29.0 1233.1 L33.9 1227.7 L32.6 1224.7 L25.3 1224.4 L25.3 1216.6 L32.6 1216.3 L33.9 1213.3 L29.0 1207.9 L34.4 1202.5 L39.8 1207.4Z" stroke="#76787d" stroke-width="2.8" fill="none" stroke-linejoin="round"/><circle cx="47" cy="1220.5" r="6" stroke="#76787d" stroke-width="2.8" fill="none" stroke-linejoin="round"/></svg><div class="r" style="left:45px;top:1228px;width:35px;height:28px;border-radius:14px;background:#4a4b4f"></div><div class="t" style="left:50.5px;top:1233.9px;font-size:19px;line-height:19px;color:#f0f0f0;font-weight:700;letter-spacing:-0.28px;">TE</div><div class="r" style="left:95px;top:55px;width:340px;height:1219px;background:#1f2023;"></div><div class="t" style="left:137.0px;top:81.2px;font-size:21px;line-height:21px;color:#d6d7da;letter-spacing:-0.33px;">EXPLORER</div><div class="r" style="left:375.5px;top:89.0px;width:4px;height:4px;border-radius:50%;background:#d6d6d8"></div><div class="r" style="left:386.0px;top:89.0px;width:4px;height:4px;border-radius:50%;background:#d6d6d8"></div><div class="r" style="left:396.5px;top:89.0px;width:4px;height:4px;border-radius:50%;background:#d6d6d8"></div><div class="r" style="left:95px;top:126px;width:340px;height:44px;background:#2b2c30;"></div><svg class="s" style="left:105px;top:142px;" width="22" height="14" viewBox="0 0 22 14"><path d="M2 2.5 L11 11.5 L20 2.5" stroke="#d2d3d6" stroke-width="2.4" fill="none"/></svg><div class="t" style="left:137.0px;top:137.4px;font-size:22px;line-height:22px;color:#cfd0d3;font-weight:700;letter-spacing:0.27px;">THEMES</div><svg class="s" style="left:0px;top:0px;" width="435" height="170" viewBox="0 0 435 170"><path d="M259.7 158.2 H251.5 V135.3 H262.8 L271 143.5 V145.5 M263 135.3 V142.5 H271" stroke="#d2d3d6" stroke-width="2.1" fill="none" stroke-linejoin="round"/><path d="M270.8 150.5 V163.6 M264.3 156.8 H277.8" stroke="#d2d3d6" stroke-width="2.1" fill="none" stroke-linejoin="round"/><path d="M307.7 157 H297.8 V135.3 H306.5 L309 137.3 H322 V145.2 M297.8 141.2 H306.5 L309 139.3 H322" stroke="#d2d3d6" stroke-width="2.1" fill="none" stroke-linejoin="round"/><path d="M319 150.5 V163.6 M312.4 156.8 H325.8" stroke="#d2d3d6" stroke-width="2.1" fill="none" stroke-linejoin="round"/><path d="M362.4 137.4 A10.6 10.6 0 1 1 351.2 139.5" stroke="#d2d3d6" stroke-width="2.1" fill="none" stroke-linejoin="round"/><path d="M346.2 136.6 H352.9 V143.5" stroke="#d2d3d6" stroke-width="2.1" fill="none" stroke-linejoin="round"/><rect x="395.3" y="143.2" width="15" height="15.5" rx="2.2" stroke="#d2d3d6" stroke-width="2.1" fill="none" stroke-linejoin="round"/><path d="M401.4 143.2 V139 a2 2 0 0 1 2-2 H414.5 a2 2 0 0 1 2 2 V150.5 a2 2 0 0 1-2 2 H410.3 M398.3 150.9 H407.5" stroke="#d2d3d6" stroke-width="2.1" fill="none" stroke-linejoin="round"/></svg><svg class="s" style="left:128.5px;top:183px;" width="22" height="17" viewBox="0 0 22 17"><path d="M8.2 1 L1.6 8.5 L8.2 16 M13.8 1 L20.4 8.5 L13.8 16" stroke="#e37933" stroke-width="2.3" fill="none"/></svg><div class="t" style="left:165.0px;top:180.0px;font-size:26px;line-height:26px;color:#d2d3d6;letter-spacing:0.50px;">index.html</div><div class="r" style="left:96px;top:214px;width:338px;height:43px;background:#2f3034;border:2px solid #6b74d6;box-sizing:border-box"></div><div class="t" style="left:129.4px;top:224.9px;font-size:22.5px;line-height:22.5px;color:#cbcb41;font-weight:700;transform:scaleX(0.747);transform-origin:left">JS</div><div class="t" style="left:165.0px;top:224.0px;font-size:26px;line-height:26px;color:#a9b1f5;letter-spacing:0.80px;">script.js</div><svg class="s" style="left:130px;top:270px;" width="20" height="19" viewBox="0 0 20 19"><path d="M8 0.5 L5 18.5 M15.5 0.5 L12.5 18.5 M1 6 H19 M0 13 H18" stroke="#519aba" stroke-width="3" fill="none"/></svg><div class="t" style="left:165.0px;top:268.0px;font-size:26px;line-height:26px;color:#d2d3d6;letter-spacing:0.54px;">style.css</div><div class="r" style="left:95px;top:1184px;width:340px;height:90px;background:#2b2c30;"></div><div class="r" style="left:95px;top:1229px;width:340px;height:1px;background:#2e2f33;"></div><svg class="s" style="left:109px;top:1196px;" width="14" height="22" viewBox="0 0 14 22"><path d="M3 2 L12 11 L3 20" stroke="#d2d3d6" stroke-width="2.4" fill="none"/></svg><div class="t" style="left:136.0px;top:1196.4px;font-size:22px;line-height:22px;color:#cfd0d3;font-weight:700;letter-spacing:0.58px;">OUTLINE</div><svg class="s" style="left:109px;top:1240px;" width="14" height="22" viewBox="0 0 14 22"><path d="M3 2 L12 11 L3 20" stroke="#d2d3d6" stroke-width="2.4" fill="none"/></svg><div class="t" style="left:136.0px;top:1240.9px;font-size:22px;line-height:22px;color:#cfd0d3;font-weight:700;letter-spacing:0.48px;">TIMELINE</div><div class="r" style="left:435px;top:55px;width:1px;height:1219px;background:#2e2f33;"></div><div class="r" style="left:436px;top:55px;width:1628px;height:70px;background:#1e1f22;"></div><div class="r" style="left:436px;top:125px;width:1628px;height:1px;background:#2e2f33;"></div><div class="r" style="left:436px;top:55px;width:240px;height:70px;background:#2b2c30;"></div><div class="r" style="left:436px;top:56px;width:240px;height:2px;background:#6b74d6;"></div><div class="t" style="left:465px;top:79.4px;font-size:22.5px;line-height:22.5px;color:#cbcb41;font-weight:700;transform:scaleX(0.747);transform-origin:left">JS</div><div class="t" style="left:501.0px;top:78.0px;font-size:26px;line-height:26px;color:#f2f2f2;letter-spacing:0.86px;">script.js</div><svg class="s" style="left:638px;top:83px;" width="16" height="16" viewBox="0 0 16 16"><path d="M1 1 L15 15 M15 1 L1 15" stroke="#f2f2f2" stroke-width="2.4"/></svg><div class="r" style="left:1931px;top:55px;width:1px;height:70px;background:#2e2f33;"></div><svg class="s" style="left:1949px;top:76px;" width="28" height="28" viewBox="0 0 28 28"><rect x="2" y="2" width="24" height="24" rx="2.5" stroke="#d6d6d8" stroke-width="2.4" fill="none"/><path d="M14 2 V26" stroke="#d6d6d8" stroke-width="2.4"/></svg><div class="r" style="left:2001.8px;top:88.8px;width:4.4px;height:4.4px;border-radius:50%;background:#d6d6d8"></div><div class="r" style="left:2011.8px;top:88.8px;width:4.4px;height:4.4px;border-radius:50%;background:#d6d6d8"></div><div class="r" style="left:2021.8px;top:88.8px;width:4.4px;height:4.4px;border-radius:50%;background:#d6d6d8"></div><div class="t" style="left:477px;top:136.4px;font-size:22.5px;line-height:22.5px;color:#cbcb41;font-weight:700;transform:scaleX(0.747);transform-origin:left">JS</div><div class="t" style="left:513.0px;top:137.0px;font-size:26px;line-height:26px;color:#a3a5a9;letter-spacing:0.74px;">script.js</div><svg class="s" style="left:616px;top:141px;" width="14" height="22" viewBox="0 0 14 22"><path d="M3 2 L12 11 L3 20" stroke="#a3a5a9" stroke-width="1.8" fill="none"/></svg><div class="t" style="left:641.0px;top:137.0px;font-size:26px;line-height:26px;color:#a3a5a9;letter-spacing:-1.83px;">...</div><div class="r" style="left:436px;top:169px;width:1628px;height:1px;background:#26272b;"></div><div class="r" style="left:568px;top:530px;width:1496px;height:36px;background:#28292d;"></div><div class="r" style="left:569.0px;top:206px;width:1.6px;height:288px;background:#3a3b3f;"></div><div class="r" style="left:626.6px;top:386px;width:1.6px;height:72px;background:#3a3b3f;"></div><div class="m" style="left:501.6px;top:177.6px;color:#5d6066">1</div><div class="m" style="left:568px;top:177.6px"><span style="color:#e3e4e6;">document</span><span style="color:#4fb4cc;">.</span><span style="color:#4fb4d0;">addEventListener</span><span style="color:#ffd700;">(</span><span style="color:#4fb4cc;">&#x27;</span><span style="color:#b8d493;">DOMContentLoaded</span><span style="color:#4fb4cc;">&#x27;</span><span style="color:#4fb4cc;">,</span><span style="color:#e3e4e6;"> </span><span style="color:#9aa0e6;font-style:italic;">function</span><span style="color:#da70d6;">()</span><span style="color:#e3e4e6;"> </span><span style="color:#da70d6;">{</span></div><div class="m" style="left:501.6px;top:213.6px;color:#5d6066">2</div><div class="m" style="left:568px;top:213.6px"><span style="color:#e3e4e6;">    </span><span style="color:#9aa0e6;font-style:italic;">const</span><span style="color:#e3e4e6;"> button </span><span style="color:#4fb4cc;">=</span><span style="color:#e3e4e6;"> document</span><span style="color:#4fb4cc;">.</span><span style="color:#4fb4d0;">getElementById</span><span style="color:#179fff;">(</span><span style="color:#4fb4cc;">&#x27;</span><span style="color:#b8d493;">button</span><span style="color:#4fb4cc;">&#x27;</span><span style="color:#179fff;">)</span><span style="color:#4fb4cc;">;</span></div><div class="m" style="left:501.6px;top:249.6px;color:#5d6066">3</div><div class="m" style="left:568px;top:249.6px"><span style="color:#e3e4e6;">    </span><span style="color:#9aa0e6;font-style:italic;">const</span><span style="color:#e3e4e6;"> title </span><span style="color:#4fb4cc;">=</span><span style="color:#e3e4e6;"> document</span><span style="color:#4fb4cc;">.</span><span style="color:#4fb4d0;">getElementById</span><span style="color:#179fff;">(</span><span style="color:#4fb4cc;">&#x27;</span><span style="color:#b8d493;">title</span><span style="color:#4fb4cc;">&#x27;</span><span style="color:#179fff;">)</span><span style="color:#4fb4cc;">;</span></div><div class="m" style="left:501.6px;top:285.6px;color:#5d6066">4</div><div class="m" style="left:568px;top:285.6px"><span style="color:#e3e4e6;">    </span><span style="color:#9aa0e6;font-style:italic;">const</span><span style="color:#e3e4e6;"> inputField </span><span style="color:#4fb4cc;">=</span><span style="color:#e3e4e6;"> document</span><span style="color:#4fb4cc;">.</span><span style="color:#4fb4d0;">getElementById</span><span style="color:#179fff;">(</span><span style="color:#4fb4cc;">&#x27;</span><span style="color:#b8d493;">input-field</span><span style="color:#4fb4cc;">&#x27;</span><span style="color:#179fff;">)</span><span style="color:#4fb4cc;">;</span></div><div class="m" style="left:501.6px;top:321.6px;color:#5d6066">5</div><div class="m" style="left:501.6px;top:357.6px;color:#5d6066">6</div><div class="m" style="left:568px;top:357.6px"><span style="color:#e3e4e6;">    button</span><span style="color:#4fb4cc;">.</span><span style="color:#4fb4d0;">addEventListener</span><span style="color:#179fff;">(</span><span style="color:#4fb4cc;">&#x27;</span><span style="color:#b8d493;">click</span><span style="color:#4fb4cc;">&#x27;</span><span style="color:#4fb4cc;">,</span><span style="color:#e3e4e6;"> </span><span style="color:#9aa0e6;font-style:italic;">function</span><span style="color:#ffd700;">()</span><span style="color:#e3e4e6;"> </span><span style="color:#ffd700;">{</span></div><div class="m" style="left:501.6px;top:393.6px;color:#5d6066">7</div><div class="m" style="left:568px;top:393.6px"><span style="color:#e3e4e6;">        title</span><span style="color:#4fb4cc;">.</span><span style="color:#e2a6dc;">textContent</span><span style="color:#e3e4e6;"> </span><span style="color:#4fb4cc;">=</span><span style="color:#e3e4e6;"> inputField</span><span style="color:#4fb4cc;">.</span><span style="color:#e2a6dc;">value</span><span style="color:#4fb4cc;">;</span></div><div class="m" style="left:501.6px;top:429.6px;color:#5d6066">8</div><div class="m" style="left:568px;top:429.6px"><span style="color:#e3e4e6;">        inputField</span><span style="color:#4fb4cc;">.</span><span style="color:#e2a6dc;">value</span><span style="color:#e3e4e6;"> </span><span style="color:#4fb4cc;">=</span><span style="color:#e3e4e6;"> </span><span style="color:#4fb4cc;">&#x27;&#x27;</span><span style="color:#4fb4cc;">;</span></div><div class="m" style="left:501.6px;top:465.6px;color:#5d6066">9</div><div class="m" style="left:568px;top:465.6px"><span style="color:#e3e4e6;">    </span><span style="color:#ffd700;">}</span><span style="color:#179fff;">)</span><span style="color:#4fb4cc;">;</span></div><div class="m" style="left:487.2px;top:501.6px;color:#5d6066">10</div><div class="m" style="left:568px;top:501.6px"><span style="color:#da70d6;">}</span><span style="color:#ffd700;">)</span><span style="color:#4fb4cc;">;</span></div><div class="m" style="left:487.2px;top:537.6px;color:#e6e6e6">11</div><div class="r" style="left:2032px;top:170px;width:1px;height:404px;background:#2e2f33;"></div><div class="r" style="left:2032px;top:170px;width:32px;height:212px;background:#3f4044;"></div><div class="r" style="left:2032px;top:359px;width:28px;height:3px;background:#a9b0e6;"></div><div class="r" style="left:436px;top:574px;width:1628px;height:1px;background:#2e2f33;"></div><div class="r" style="left:436px;top:575px;width:1628px;height:67px;background:#1e1f22;"></div><div class="r" style="left:436px;top:641px;width:1628px;height:1px;background:#2e2f33;"></div><div class="r" style="left:436px;top:575px;width:246px;height:66px;background:#2b2c30;"></div><div class="r" style="left:436px;top:574px;width:246px;height:2px;background:#5d64a8;"></div><svg class="s" style="left:464px;top:600px;" width="22" height="17" viewBox="0 0 22 17"><path d="M8.2 1 L1.6 8.5 L8.2 16 M13.8 1 L20.4 8.5 L13.8 16" stroke="#e37933" stroke-width="2.3" fill="none"/></svg><div class="t" style="left:501.0px;top:596.7px;font-size:26px;line-height:26px;color:#a0a2a6;letter-spacing:0.50px;">index.html</div><svg class="s" style="left:645px;top:601px;" width="17" height="17" viewBox="0 0 17 17"><path d="M1 1 L16 16 M16 1 L1 16" stroke="#8a8c90" stroke-width="2"/></svg><div class="r" style="left:1982px;top:575px;width:1px;height:66px;background:#2e2f33;"></div><div class="r" style="left:2001.8px;top:606.8px;width:4.4px;height:4.4px;border-radius:50%;background:#d6d6d8"></div><div class="r" style="left:2011.8px;top:606.8px;width:4.4px;height:4.4px;border-radius:50%;background:#d6d6d8"></div><div class="r" style="left:2021.8px;top:606.8px;width:4.4px;height:4.4px;border-radius:50%;background:#d6d6d8"></div><svg class="s" style="left:476.5px;top:657.5px;" width="22" height="17" viewBox="0 0 22 17"><path d="M8.2 1 L1.6 8.5 L8.2 16 M13.8 1 L20.4 8.5 L13.8 16" stroke="#e37933" stroke-width="2.3" fill="none"/></svg><div class="t" style="left:513.6px;top:653.2px;font-size:26px;line-height:26px;color:#a3a5a9;letter-spacing:0.44px;">index.html</div><svg class="s" style="left:646px;top:657px;" width="14" height="22" viewBox="0 0 14 22"><path d="M3 2 L12 11 L3 20" stroke="#a3a5a9" stroke-width="1.8" fill="none"/></svg><div class="t" style="left:671.0px;top:653.2px;font-size:26px;line-height:26px;color:#a3a5a9;letter-spacing:-2.13px;">...</div><div class="r" style="left:436px;top:686px;width:1628px;height:1px;background:#26272b;"></div><div class="r" style="left:568px;top:1227px;width:1496px;height:36px;background:#28292d;"></div><div class="r" style="left:569.0px;top:795px;width:1.6px;height:72px;background:#3a3b3f;"></div><div class="r" style="left:569.0px;top:939px;width:1.6px;height:216px;background:#3a3b3f;"></div><div class="r" style="left:626.6px;top:975px;width:1.6px;height:108px;background:#3a3b3f;"></div><div class="m" style="left:501.6px;top:694.6px;color:#5d6066">1</div><div class="m" style="left:568px;top:694.6px"><span style="color:#8f949c;">&lt;</span><span style="color:#86b0f7;">!DOCTYPE</span><span style="color:#e3e4e6;"> </span><span style="color:#c5a4f2;font-style:italic;">html</span><span style="color:#8f949c;">&gt;</span></div><div class="m" style="left:501.6px;top:730.6px;color:#5d6066">2</div><div class="m" style="left:568px;top:730.6px"><span style="color:#8f949c;">&lt;</span><span style="color:#86b0f7;">html</span><span style="color:#8f949c;">&gt;</span></div><div class="m" style="left:501.6px;top:766.6px;color:#5d6066">3</div><div class="m" style="left:568px;top:766.6px"><span style="color:#8f949c;">&lt;</span><span style="color:#86b0f7;">head</span><span style="color:#8f949c;">&gt;</span></div><div class="m" style="left:501.6px;top:802.6px;color:#5d6066">4</div><div class="m" style="left:568px;top:802.6px"><span style="color:#e3e4e6;">    </span><span style="color:#8f949c;">&lt;</span><span style="color:#86b0f7;">title</span><span style="color:#8f949c;">&gt;</span><span style="color:#e3e4e6;">Simple App</span><span style="color:#8f949c;">&lt;/</span><span style="color:#86b0f7;">title</span><span style="color:#8f949c;">&gt;</span></div><div class="m" style="left:501.6px;top:838.6px;color:#5d6066">5</div><div class="m" style="left:568px;top:838.6px"><span style="color:#e3e4e6;">    </span><span style="color:#8f949c;">&lt;</span><span style="color:#86b0f7;">link</span><span style="color:#e3e4e6;"> </span><span style="color:#c5a4f2;font-style:italic;">rel</span><span style="color:#4fb4cc;">=</span><span style="color:#9fb8c0;">&quot;</span><span style="color:#c0dc96;">stylesheet</span><span style="color:#9fb8c0;">&quot;</span><span style="color:#e3e4e6;"> </span><span style="color:#c5a4f2;font-style:italic;">type</span><span style="color:#4fb4cc;">=</span><span style="color:#9fb8c0;">&quot;</span><span style="color:#c0dc96;">text/css</span><span style="color:#9fb8c0;">&quot;</span><span style="color:#e3e4e6;"> </span><span style="color:#c5a4f2;font-style:italic;">href</span><span style="color:#4fb4cc;">=</span><span style="color:#9fb8c0;">&quot;</span><span style="color:#c0dc96;text-decoration:underline;text-underline-offset:4px;text-decoration-thickness:2px;">styles.css</span><span style="color:#9fb8c0;">&quot;</span><span style="color:#8f949c;">&gt;</span></div><div class="m" style="left:501.6px;top:874.6px;color:#5d6066">6</div><div class="m" style="left:568px;top:874.6px"><span style="color:#8f949c;">&lt;/</span><span style="color:#86b0f7;">head</span><span style="color:#8f949c;">&gt;</span></div><div class="m" style="left:501.6px;top:910.6px;color:#5d6066">7</div><div class="m" style="left:568px;top:910.6px"><span style="color:#8f949c;">&lt;</span><span style="color:#86b0f7;">body</span><span style="color:#8f949c;">&gt;</span></div><div class="m" style="left:501.6px;top:946.6px;color:#5d6066">8</div><div class="m" style="left:568px;top:946.6px"><span style="color:#e3e4e6;">    </span><span style="color:#8f949c;">&lt;</span><span style="color:#86b0f7;">div</span><span style="color:#e3e4e6;"> </span><span style="color:#c5a4f2;font-style:italic;">id</span><span style="color:#4fb4cc;">=</span><span style="color:#9fb8c0;">&quot;</span><span style="color:#c0dc96;">app</span><span style="color:#9fb8c0;">&quot;</span><span style="color:#8f949c;">&gt;</span></div><div class="m" style="left:501.6px;top:982.6px;color:#5d6066">9</div><div class="m" style="left:568px;top:982.6px"><span style="color:#e3e4e6;">        </span><span style="color:#8f949c;">&lt;</span><span style="color:#86b0f7;">h1</span><span style="color:#e3e4e6;"> </span><span style="color:#c5a4f2;font-style:italic;">id</span><span style="color:#4fb4cc;">=</span><span style="color:#9fb8c0;">&quot;</span><span style="color:#c0dc96;">title</span><span style="color:#9fb8c0;">&quot;</span><span style="color:#8f949c;">&gt;</span><span style="color:#e3e4e6;">Hello, World!</span><span style="color:#8f949c;">&lt;/</span><span style="color:#86b0f7;">h1</span><span style="color:#8f949c;">&gt;</span></div><div class="m" style="left:487.2px;top:1018.6px;color:#5d6066">10</div><div class="m" style="left:568px;top:1018.6px"><span style="color:#e3e4e6;">        </span><span style="color:#8f949c;">&lt;</span><span style="color:#86b0f7;">input</span><span style="color:#e3e4e6;"> </span><span style="color:#c5a4f2;font-style:italic;">id</span><span style="color:#4fb4cc;">=</span><span style="color:#9fb8c0;">&quot;</span><span style="color:#c0dc96;">input-field</span><span style="color:#9fb8c0;">&quot;</span><span style="color:#e3e4e6;"> </span><span style="color:#c5a4f2;font-style:italic;">type</span><span style="color:#4fb4cc;">=</span><span style="color:#9fb8c0;">&quot;</span><span style="color:#c0dc96;">text</span><span style="color:#9fb8c0;">&quot;</span><span style="color:#e3e4e6;"> </span><span style="color:#c5a4f2;font-style:italic;">placeholder</span><span style="color:#4fb4cc;">=</span><span style="color:#9fb8c0;">&quot;</span><span style="color:#c0dc96;">Type something...</span><span style="color:#9fb8c0;">&quot;</span><span style="color:#8f949c;">&gt;</span></div><div class="m" style="left:487.2px;top:1054.6px;color:#5d6066">11</div><div class="m" style="left:568px;top:1054.6px"><span style="color:#e3e4e6;">        </span><span style="color:#8f949c;">&lt;</span><span style="color:#86b0f7;">button</span><span style="color:#e3e4e6;"> </span><span style="color:#c5a4f2;font-style:italic;">id</span><span style="color:#4fb4cc;">=</span><span style="color:#9fb8c0;">&quot;</span><span style="color:#c0dc96;">button</span><span style="color:#9fb8c0;">&quot;</span><span style="color:#8f949c;">&gt;</span><span style="color:#e3e4e6;">Update Heading</span><span style="color:#8f949c;">&lt;/</span><span style="color:#86b0f7;">button</span><span style="color:#8f949c;">&gt;</span></div><div class="m" style="left:487.2px;top:1090.6px;color:#5d6066">12</div><div class="m" style="left:568px;top:1090.6px"><span style="color:#e3e4e6;">    </span><span style="color:#8f949c;">&lt;/</span><span style="color:#86b0f7;">div</span><span style="color:#8f949c;">&gt;</span></div><div class="m" style="left:487.2px;top:1126.6px;color:#5d6066">13</div><div class="m" style="left:568px;top:1126.6px"><span style="color:#e3e4e6;">    </span><span style="color:#8f949c;">&lt;</span><span style="color:#86b0f7;">script</span><span style="color:#e3e4e6;"> </span><span style="color:#c5a4f2;font-style:italic;">src</span><span style="color:#4fb4cc;">=</span><span style="color:#9fb8c0;">&quot;</span><span style="color:#c0dc96;text-decoration:underline;text-underline-offset:4px;text-decoration-thickness:2px;">script.js</span><span style="color:#9fb8c0;">&quot;</span><span style="color:#8f949c;">&gt;&lt;/</span><span style="color:#86b0f7;">script</span><span style="color:#8f949c;">&gt;</span></div><div class="m" style="left:487.2px;top:1162.6px;color:#5d6066">14</div><div class="m" style="left:568px;top:1162.6px"><span style="color:#8f949c;">&lt;/</span><span style="color:#86b0f7;">body</span><span style="color:#8f949c;">&gt;</span></div><div class="m" style="left:487.2px;top:1198.6px;color:#5d6066">15</div><div class="m" style="left:568px;top:1198.6px"><span style="color:#8f949c;">&lt;/</span><span style="color:#86b0f7;">html</span><span style="color:#8f949c;">&gt;</span></div><div class="m" style="left:487.2px;top:1234.6px;color:#e6e6e6">16</div><div class="r" style="left:2032px;top:687px;width:1px;height:587px;background:#2e2f33;"></div><div class="r" style="left:2032px;top:966px;width:32px;height:3px;background:#a9b0e6;"></div><div class="r" style="left:0px;top:1274px;width:2064px;height:42px;background:#3579c8;"></div><div class="r" style="left:0px;top:1274px;width:68px;height:42px;background:#6a6fd3;"></div><div class="r" style="left:68px;top:1274px;width:68px;height:42px;background:#1b3f6c;"></div><svg class="s" style="left:0px;top:1274px;" width="68" height="42" viewBox="0 0 68 42"><path d="M25.5 15 L33.5 23 L25.5 31 M41.5 9 L34 16.5 L41.5 24" stroke="#fff" stroke-width="2.2" fill="none"/></svg><svg class="s" style="left:90px;top:1281px;" width="26" height="26" viewBox="0 0 26 26"><path d="M13 2 L23 6 V12 C23 18 19 22 13 24.5 C7 22 3 18 3 12 V6 Z" stroke="#b7c3d3" stroke-width="2" fill="none"/><circle cx="13" cy="11" r="2.6" fill="#b7c3d3"/><path d="M13 12 V17" stroke="#b7c3d3" stroke-width="2.4"/></svg><svg class="s" style="left:153px;top:1281px;" width="26" height="26" viewBox="0 0 26 26"><circle cx="13" cy="13" r="11" stroke="#e8eef6" stroke-width="2" fill="none"/><path d="M8.5 8.5 L17.5 17.5 M17.5 8.5 L8.5 17.5" stroke="#e8eef6" stroke-width="2"/></svg><div class="t" style="left:188.0px;top:1282.8px;font-size:25px;line-height:25px;color:#e8eef6;">0</div><svg class="s" style="left:210px;top:1280px;" width="26" height="26" viewBox="0 0 26 26"><path d="M13 2 L24.5 23.5 H1.5 Z" stroke="#e8eef6" stroke-width="2" fill="none" stroke-linejoin="round"/><path d="M13 9.5 V16" stroke="#e8eef6" stroke-width="2.2"/><circle cx="13" cy="19.5" r="1.3" fill="#e8eef6"/></svg><div class="t" style="left:245.0px;top:1282.8px;font-size:25px;line-height:25px;color:#e8eef6;">0</div><div class="t" style="left:1281.5px;top:1282.8px;font-size:25px;line-height:25px;color:#e8eef6;letter-spacing:0.23px;">Ln 11, Col 1</div><div class="t" style="left:1451.0px;top:1282.8px;font-size:25px;line-height:25px;color:#e8eef6;letter-spacing:-0.03px;">Spaces: 4</div><div class="t" style="left:1596.5px;top:1282.8px;font-size:25px;line-height:25px;color:#e8eef6;letter-spacing:-0.33px;">UTF-8</div><div class="t" style="left:1701.0px;top:1282.8px;font-size:25px;line-height:25px;color:#e8eef6;letter-spacing:-3.57px;">LF</div><div class="t" style="left:1758.7px;top:1282.8px;font-size:25px;line-height:25px;color:#e8eef6;letter-spacing:-1.17px;">{ }</div><div class="t" style="left:1796.0px;top:1282.8px;font-size:25px;line-height:25px;color:#e8eef6;letter-spacing:0.03px;">JavaScript</div><svg class="s" style="left:1942px;top:1280px;" width="28" height="28" viewBox="0 0 28 28"><circle cx="10" cy="9" r="5.5" stroke="#e8eef6" stroke-width="2" fill="none"/><path d="M2 24 C2 18 5.5 15.5 10 15.5 C12 15.5 14 16 15 17" stroke="#e8eef6" stroke-width="2" fill="none"/><path d="M15 3 H26 V11 H21 L17 14 V11 H15" stroke="#e8eef6" stroke-width="1.8" fill="none"/></svg><svg class="s" style="left:2004px;top:1280px;" width="26" height="28" viewBox="0 0 26 28"><path d="M4 20 H22 L19.5 16.5 V11 C19.5 6.5 16.5 3.5 13 3.5 C9.5 3.5 6.5 6.5 6.5 11 V16.5 Z" stroke="#e8eef6" stroke-width="2" fill="none" stroke-linejoin="round"/><path d="M10.5 23.5 H15.5" stroke="#e8eef6" stroke-width="2"/></svg><div class="r" style="left:0px;top:0px;width:2064px;height:1px;background:#5b5c60;"></div></div><div class="r" style="left:736px;top:2192px;width:8px;height:8px;background:#000;"></div></body></html>
